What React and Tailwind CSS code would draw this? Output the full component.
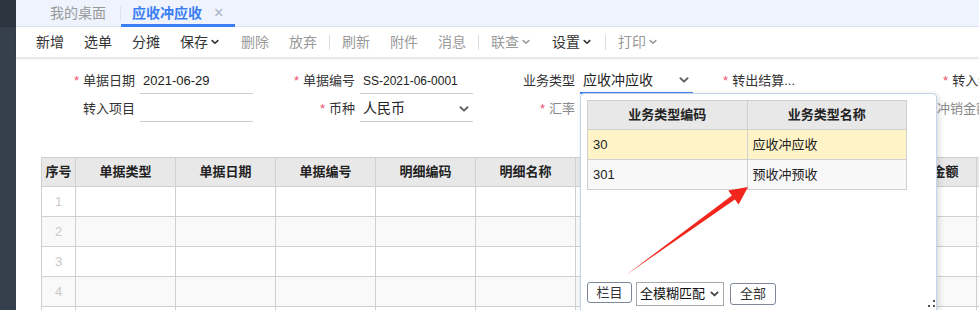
import React from "react";

const Chev = ({ className }) => (
  <svg viewBox="0 0 10 6" className={className} fill="none" stroke="currentColor" strokeWidth="2" strokeLinecap="round" strokeLinejoin="round">
    <path d="M1.5 1.2 5 4.6 8.5 1.2" />
  </svg>
);

const tools = [
  { t: "新增" },
  { t: "选单" },
  { t: "分摊" },
  { t: "保存", chev: true },
  { t: "删除", dis: true },
  { t: "放弃", dis: true },
  { sep: true },
  { t: "刷新", dis: true },
  { t: "附件", dis: true },
  { t: "消息", dis: true },
  { sep: true },
  { t: "联查", dis: true, chev: true },
  { t: "设置", chev: true },
  { sep: true },
  { t: "打印", dis: true, chev: true },
];

function Field({ label, req, value, valueClass = "text-[14px]", chev, gray, active }) {
  return (
    <div className="flex w-[220px] h-[26px] shrink-0">
      <div className={"w-[107px] shrink-0 pr-[5px] text-right leading-[26px] text-[13px] whitespace-nowrap " + (gray ? "text-[#8a8a8a]" : "text-[#333]")}>
        {req && <span className="text-[#f0506e] mr-[4px]">*</span>}
        {label}
      </div>
      <div className={"w-[113px] shrink-0 h-[26px] flex items-center justify-between " + (active ? "border-b-2 border-[#3d84f0]" : "border-b border-[#cccccc]")}>
        <span className={"pl-[3px] text-[#222] whitespace-nowrap " + valueClass}>{value}</span>
        {chev && <Chev className="w-[10px] h-[6px] mr-[4px] text-[#666]" />}
      </div>
    </div>
  );
}

const cols = [
  [34, "序号"], [100, "单据类型"], [100, "单据日期"], [100, "单据编号"], [100, "明细编码"],
  [100, "明细名称"], [100, "币种"], [100, "原币金额"], [100, "汇率"], [101, "未核销金额"], [100, "本次冲销"],
];

export default function App() {
  return (
    <div className="relative w-[979px] h-[310px] overflow-hidden bg-white flex font-['Liberation_Sans','Noto_Sans_CJK_SC',sans-serif]">
      {/* sidebar strip */}
      <div className="w-[16px] shrink-0 flex flex-col">
        <div className="h-[27px] shrink-0 bg-[#2c343f]" />
        <div className="flex-1 bg-[#36404c]" />
      </div>

      <div className="flex-1 flex flex-col min-w-0">
        {/* tabs */}
        <div className="h-[27px] shrink-0 bg-[#eef3fd] border-b border-[#dfe5ef] flex items-stretch">
          <div className="pl-[34px] pr-[14px] flex items-center text-[14px] text-[#999]">我的桌面</div>
          <div className="w-px bg-[#dde2ea] my-[6px]" />
          <div className="relative pl-[11px] pr-[12px] flex items-center text-[14px] text-[#3c7ff2] font-semibold">
            应收冲应收
            <span className="ml-[12px] text-[#aab2bf] font-normal text-[16px] leading-none">×</span>
            <div className="absolute left-0 right-0 bottom-[-1px] h-[3px] bg-[#3c7ff2]" />
          </div>
        </div>

        {/* toolbar */}
        <div className="h-[31px] shrink-0 flex items-center pl-[10px] bg-white shadow-[0_1px_2px_rgba(0,0,0,0.12)] border-b border-[#e6e6e6] relative z-10">
          {tools.map((it, i) =>
            it.sep ? (
              <div key={i} className="w-px h-[15px] bg-[#dcdcdc] mx-[2px]" />
            ) : (
              <div key={i} className={"flex items-center pl-[10px] text-[14px] " + (it.chev ? "pr-[12px]" : "pr-[10px]") + (it.dis ? " text-[#9a9a9a]" : " text-[#333]")}>
                {it.t}
                {it.chev && <Chev className="w-[8px] h-[6px] ml-[3px]" />}
              </div>
            )
          )}
        </div>

        {/* form */}
        <div className="shrink-0 pl-[17px] pt-[10px] flex flex-col gap-[2px]">
          <div className="flex">
            <Field req label="单据日期" value="2021-06-29" valueClass="text-[13px]" />
            <Field req label="单据编号" value="SS-2021-06-0001" valueClass="text-[12px] pl-[1px]" />
            <Field label="业务类型" value="应收冲应收" chev active />
            <Field req label="转出结算..." value="" />
            <Field req label="转入结算..." value="" />
          </div>
          <div className="flex">
            <Field label="转入项目" value="" />
            <Field req label="币种" value="人民币" chev />
            <Field req gray label="汇率" value="" />
            <Field label="冲销方式" value="" />
            <Field gray label="冲销金额合计" value="" />
          </div>
        </div>

        {/* grid */}
        <div className="shrink-0 ml-[25px] mt-[35px] border-l border-t border-[#d0d0d0] w-max">
          <div className="flex bg-[#e8e8e8]">
            {cols.map(([w, t], i) => (
              <div key={i} style={{ width: w }} className="h-[29px] shrink-0 border-r border-b border-[#d0d0d0] flex items-center justify-center text-[13px] font-bold text-[#222] whitespace-nowrap">
                {t}
              </div>
            ))}
          </div>
          {[1, 2, 3, 4, 5].map((n) => (
            <div key={n} className={"flex " + (n % 2 === 0 ? "bg-[#f9f9f9]" : "bg-white")}>
              {cols.map(([w], i) => (
                <div key={i} style={{ width: w }} className="h-[30px] shrink-0 border-r border-b border-[#d0d0d0] flex items-center justify-center text-[13px] text-[#c8c8c8]">
                  {i === 0 ? n : ""}
                </div>
              ))}
            </div>
          ))}
        </div>
      </div>

      {/* dropdown panel */}
      <div className="absolute left-[580px] top-[93px] w-[357px] h-[230px] bg-white border border-[#c5d3ec] rounded-t-[4px] shadow-[2px_2px_6px_rgba(0,0,0,0.15)] p-[6px] flex flex-col z-20">
        <div className="border-l border-t border-[#d0d0d0] w-[320px]">
          <div className="flex bg-[#e8e8e8]">
            <div className="w-[160px] h-[29px] border-r border-b border-[#d0d0d0] flex items-center justify-center text-[13px] font-bold text-[#222]">业务类型编码</div>
            <div className="w-[160px] h-[29px] border-r border-b border-[#d0d0d0] flex items-center justify-center text-[13px] font-bold text-[#222]">业务类型名称</div>
          </div>
          <div className="flex bg-[#fff4c8]">
            <div className="w-[160px] h-[30px] border-r border-b border-[#d0d0d0] flex items-center pl-[5px] text-[13px] text-[#222]">30</div>
            <div className="w-[160px] h-[30px] border-r border-b border-[#d0d0d0] flex items-center pl-[5px] text-[13px] text-[#222]">应收冲应收</div>
          </div>
          <div className="flex bg-[#f8f8f8]">
            <div className="w-[160px] h-[30px] border-r border-b border-[#d0d0d0] flex items-center pl-[5px] text-[13px] text-[#222]">301</div>
            <div className="w-[160px] h-[30px] border-r border-b border-[#d0d0d0] flex items-center pl-[5px] text-[13px] text-[#222]">预收冲预收</div>
          </div>
        </div>
        <div className="mt-[92px] flex items-start gap-[4px]">
          <div className="w-[45px] h-[21px] border border-[#7d8799] rounded-[3px] flex items-center justify-center text-[13px] text-[#333]">栏目</div>
          <div className="w-[88px] h-[24px] border border-[#a9a9a9] flex items-center justify-between pl-[3px] pr-[4px] text-[13px] text-[#111]">
            全模糊匹配
            <Chev className="w-[9px] h-[6px] text-[#444]" />
          </div>
          <div className="ml-[2px] mt-[1px] w-[46px] h-[22px] border border-[#7d8799] rounded-[3px] flex items-center justify-center text-[13px] text-[#333]">全部</div>
        </div>
        <svg className="absolute left-[347px] top-[206px] w-[7px] h-[7px]" viewBox="0 0 7 7">
          <rect x="5" y="0" width="2" height="2" fill="#555" />
          <rect x="0" y="5" width="2" height="2" fill="#555" />
          <rect x="5" y="5" width="2" height="2" fill="#555" />
        </svg>
      </div>

      {/* red annotation arrow */}
      <svg className="absolute left-0 top-0 w-[979px] h-[310px] pointer-events-none z-30" viewBox="0 0 979 310">
        <polygon
          fill="#f2261c"
          points="626,275 734.9,199.5 738.6,204.5 748,187 728.2,190.5 731.9,195.5"
        />
      </svg>
    </div>
  );
}
